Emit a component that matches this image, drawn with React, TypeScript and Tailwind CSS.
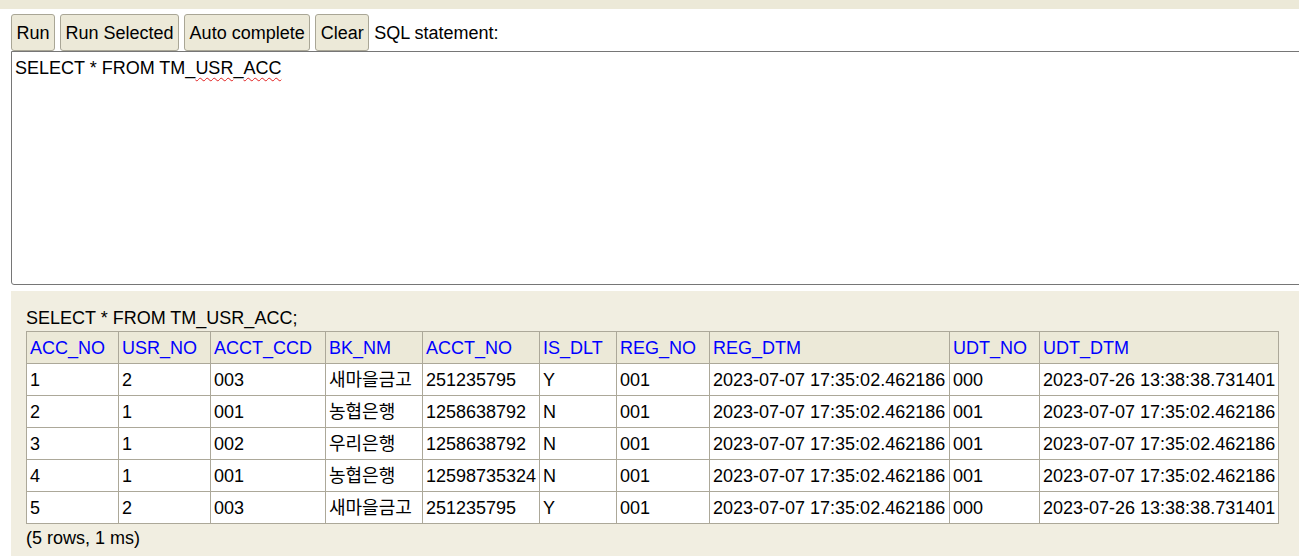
import React from "react";

const headers = ["ACC_NO","USR_NO","ACCT_CCD","BK_NM","ACCT_NO","IS_DLT","REG_NO","REG_DTM","UDT_NO","UDT_DTM"];
const widths = [92,92,115,97,117,77,93,240,90,239];
const rows = [
  ["1","2","003","새마을금고","251235795","Y","001","2023-07-07 17:35:02.462186","000","2023-07-26 13:38:38.731401"],
  ["2","1","001","농협은행","1258638792","N","001","2023-07-07 17:35:02.462186","001","2023-07-07 17:35:02.462186"],
  ["3","1","002","우리은행","1258638792","N","001","2023-07-07 17:35:02.462186","001","2023-07-07 17:35:02.462186"],
  ["4","1","001","농협은행","12598735324","N","001","2023-07-07 17:35:02.462186","001","2023-07-07 17:35:02.462186"],
  ["5","2","003","새마을금고","251235795","Y","001","2023-07-07 17:35:02.462186","000","2023-07-26 13:38:38.731401"],
];

function Btn({ children }: { children: React.ReactNode }) {
  return (
    <button className="h-[37px] px-[4.5px] bg-[#ece9d8] border border-[#a9a696] rounded-[3px] text-[18px] leading-[20px] text-black">
      {children}
    </button>
  );
}

export default function App() {
  return (
    <div
      className="w-[1299px] h-[556px] overflow-hidden bg-white text-black"
      style={{ fontFamily: '"Liberation Sans", Arial, "Noto Sans CJK KR", sans-serif' }}
    >
      <div className="h-[9px] bg-[#ece9d8]" />
      <div className="pl-[11px] pt-[5px]">
        <div className="flex items-center gap-[5px] h-[37px]">
          <Btn>Run</Btn>
          <Btn>Run Selected</Btn>
          <Btn>Auto complete</Btn>
          <Btn>Clear</Btn>
          <span className="text-[18px] leading-[20px]">SQL statement:</span>
        </div>
        <div className="w-[1320px] h-[234px] border border-[#767676] rounded-bl-[3px] px-[3px] pt-[5px] text-[18px] leading-[22px]">
          SELECT * FROM TM_
          <span className="underline decoration-wavy decoration-[#e02020] decoration-1 underline-offset-[3px]">USR</span>_
          <span className="underline decoration-wavy decoration-[#e02020] decoration-1 underline-offset-[3px]">ACC</span>
        </div>
      </div>
      <div className="ml-[11px] mt-[6px] h-[300px] bg-[#f1eee1] pl-[15px] pt-[17px]">
        <div className="text-[18px] leading-[20px]">SELECT * FROM TM_USR_ACC;</div>
        <table className="mt-[3px] border-collapse table-fixed w-[1253px] text-[18px]">
          <colgroup>
            {widths.map((w, i) => (
              <col key={i} style={{ width: w }} />
            ))}
          </colgroup>
          <thead>
            <tr className="h-[32px]">
              {headers.map((h) => (
                <th key={h} className="border border-[#aca899] bg-[#ece9d8] text-[#0000ff] font-normal text-left px-[3px] py-0 leading-[20px] whitespace-nowrap">
                  {h}
                </th>
              ))}
            </tr>
          </thead>
          <tbody>
            {rows.map((r, ri) => (
              <tr key={ri} className="h-[32px]">
                {r.map((c, ci) => (
                  <td key={ci} className="border border-[#aca899] bg-white px-[3px] py-0 leading-[20px] whitespace-nowrap overflow-hidden">
                    {c}
                  </td>
                ))}
              </tr>
            ))}
          </tbody>
        </table>
        <div className="mt-[4px] text-[18px] leading-[20px]">(5 rows, 1 ms)</div>
      </div>
    </div>
  );
}
